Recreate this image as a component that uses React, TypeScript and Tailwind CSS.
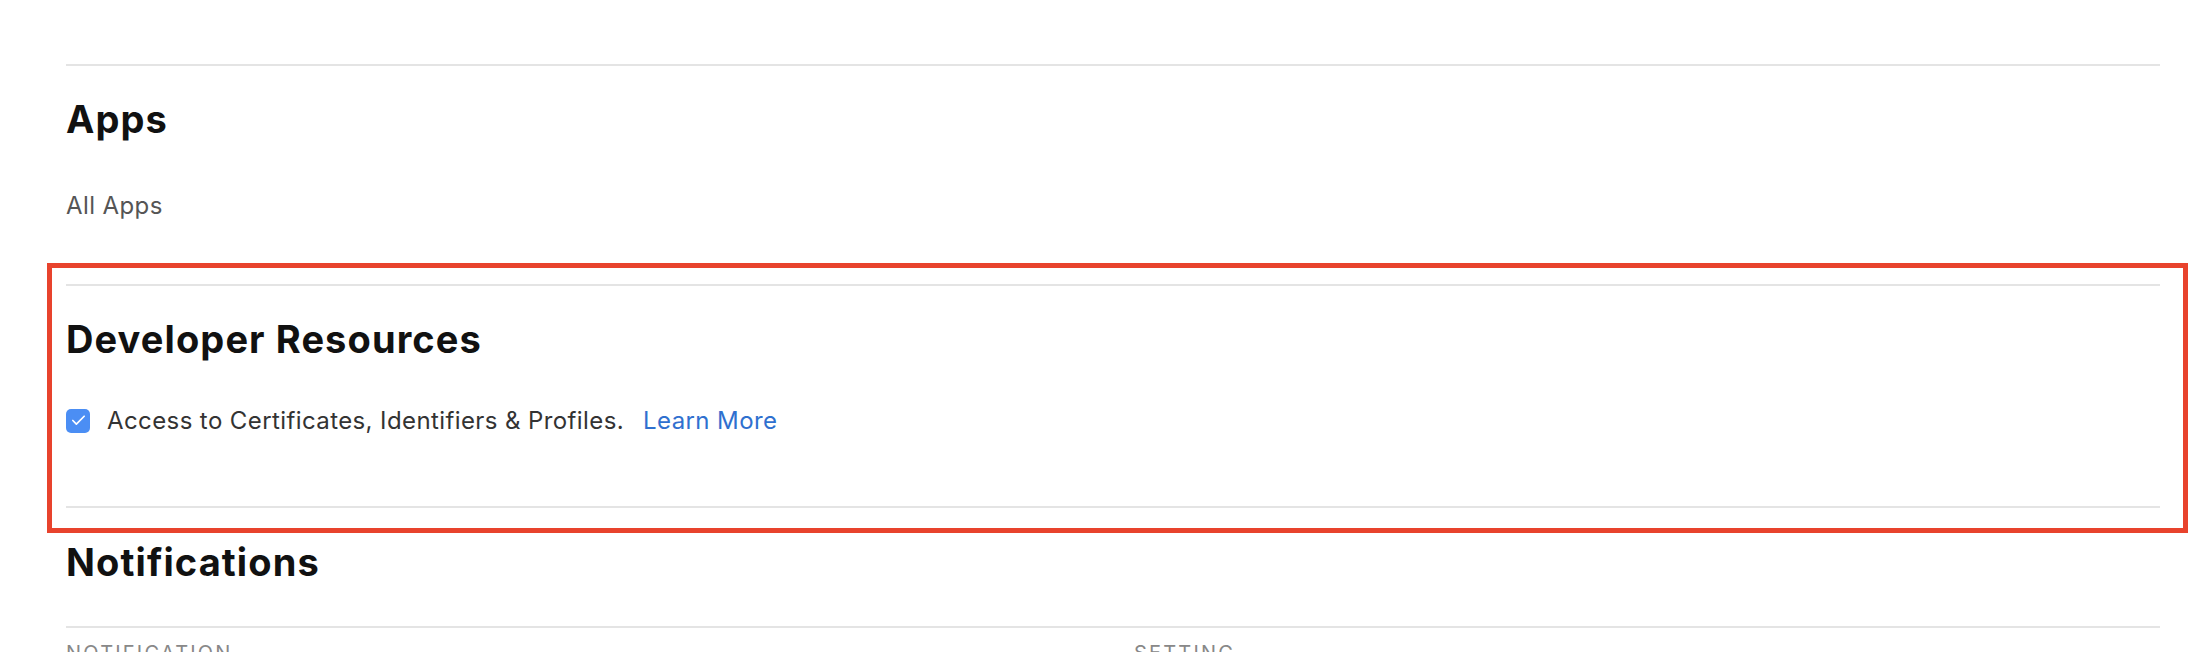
import { Check } from 'lucide-react';

const SECTION_RULE = 'border-t-2 border-[#e4e4e4]';

function Heading({ children }: { children: React.ReactNode }) {
  return <h2 className="text-[38px] leading-[46px] font-bold text-[#111111] tracking-[1.1px]">{children}</h2>;
}

export default function App() {
  return (
    <div className="relative h-[652px] overflow-hidden bg-white font-['Inter','Liberation_Sans',sans-serif]">
      <div className="ml-[66px] w-[2094px] pt-[64px]">
        {/* Apps */}
        <section className={`${SECTION_RULE} pt-[30px] pb-[64px]`}>
          <Heading>Apps</Heading>
          <p className="mt-[49px] text-[24px] leading-[29px] tracking-[0.4px] text-[#555555]">All Apps</p>
        </section>

        {/* Developer Resources */}
        <section className={`${SECTION_RULE} pt-[30px] pb-[71px]`}>
          <Heading>Developer Resources</Heading>
          <div className="mt-[44px] flex items-center text-[24px] leading-[29px] tracking-[0.4px]">
            <span className="flex h-[24px] w-[24px] items-center justify-center rounded-[5px] bg-[#4b8ef4]">
              <Check className="h-[17px] w-[17px] text-white" strokeWidth={2.4} />
            </span>
            <span className="ml-[17px] text-[#333333]">Access to Certificates, Identifiers &amp; Profiles.</span>
            <a className="ml-[19px] text-[#2f70cf]">Learn More</a>
          </div>
        </section>

        {/* Notifications */}
        <section className={`${SECTION_RULE} pt-[31px] pb-[41px]`}>
          <Heading>Notifications</Heading>
        </section>
        <div className={`${SECTION_RULE} grid grid-cols-[1068px_1fr] pt-[13px] text-[20px] leading-[24px] uppercase tracking-[2.2px] text-[#888888]`}>
          <span>Notification</span>
          <span>Setting</span>
        </div>
      </div>

      {/* highlight annotation */}
      <div className="pointer-events-none absolute left-[47px] top-[263px] h-[270px] w-[2141px] border-[5px] border-[#e8432d]" />
    </div>
  );
}
